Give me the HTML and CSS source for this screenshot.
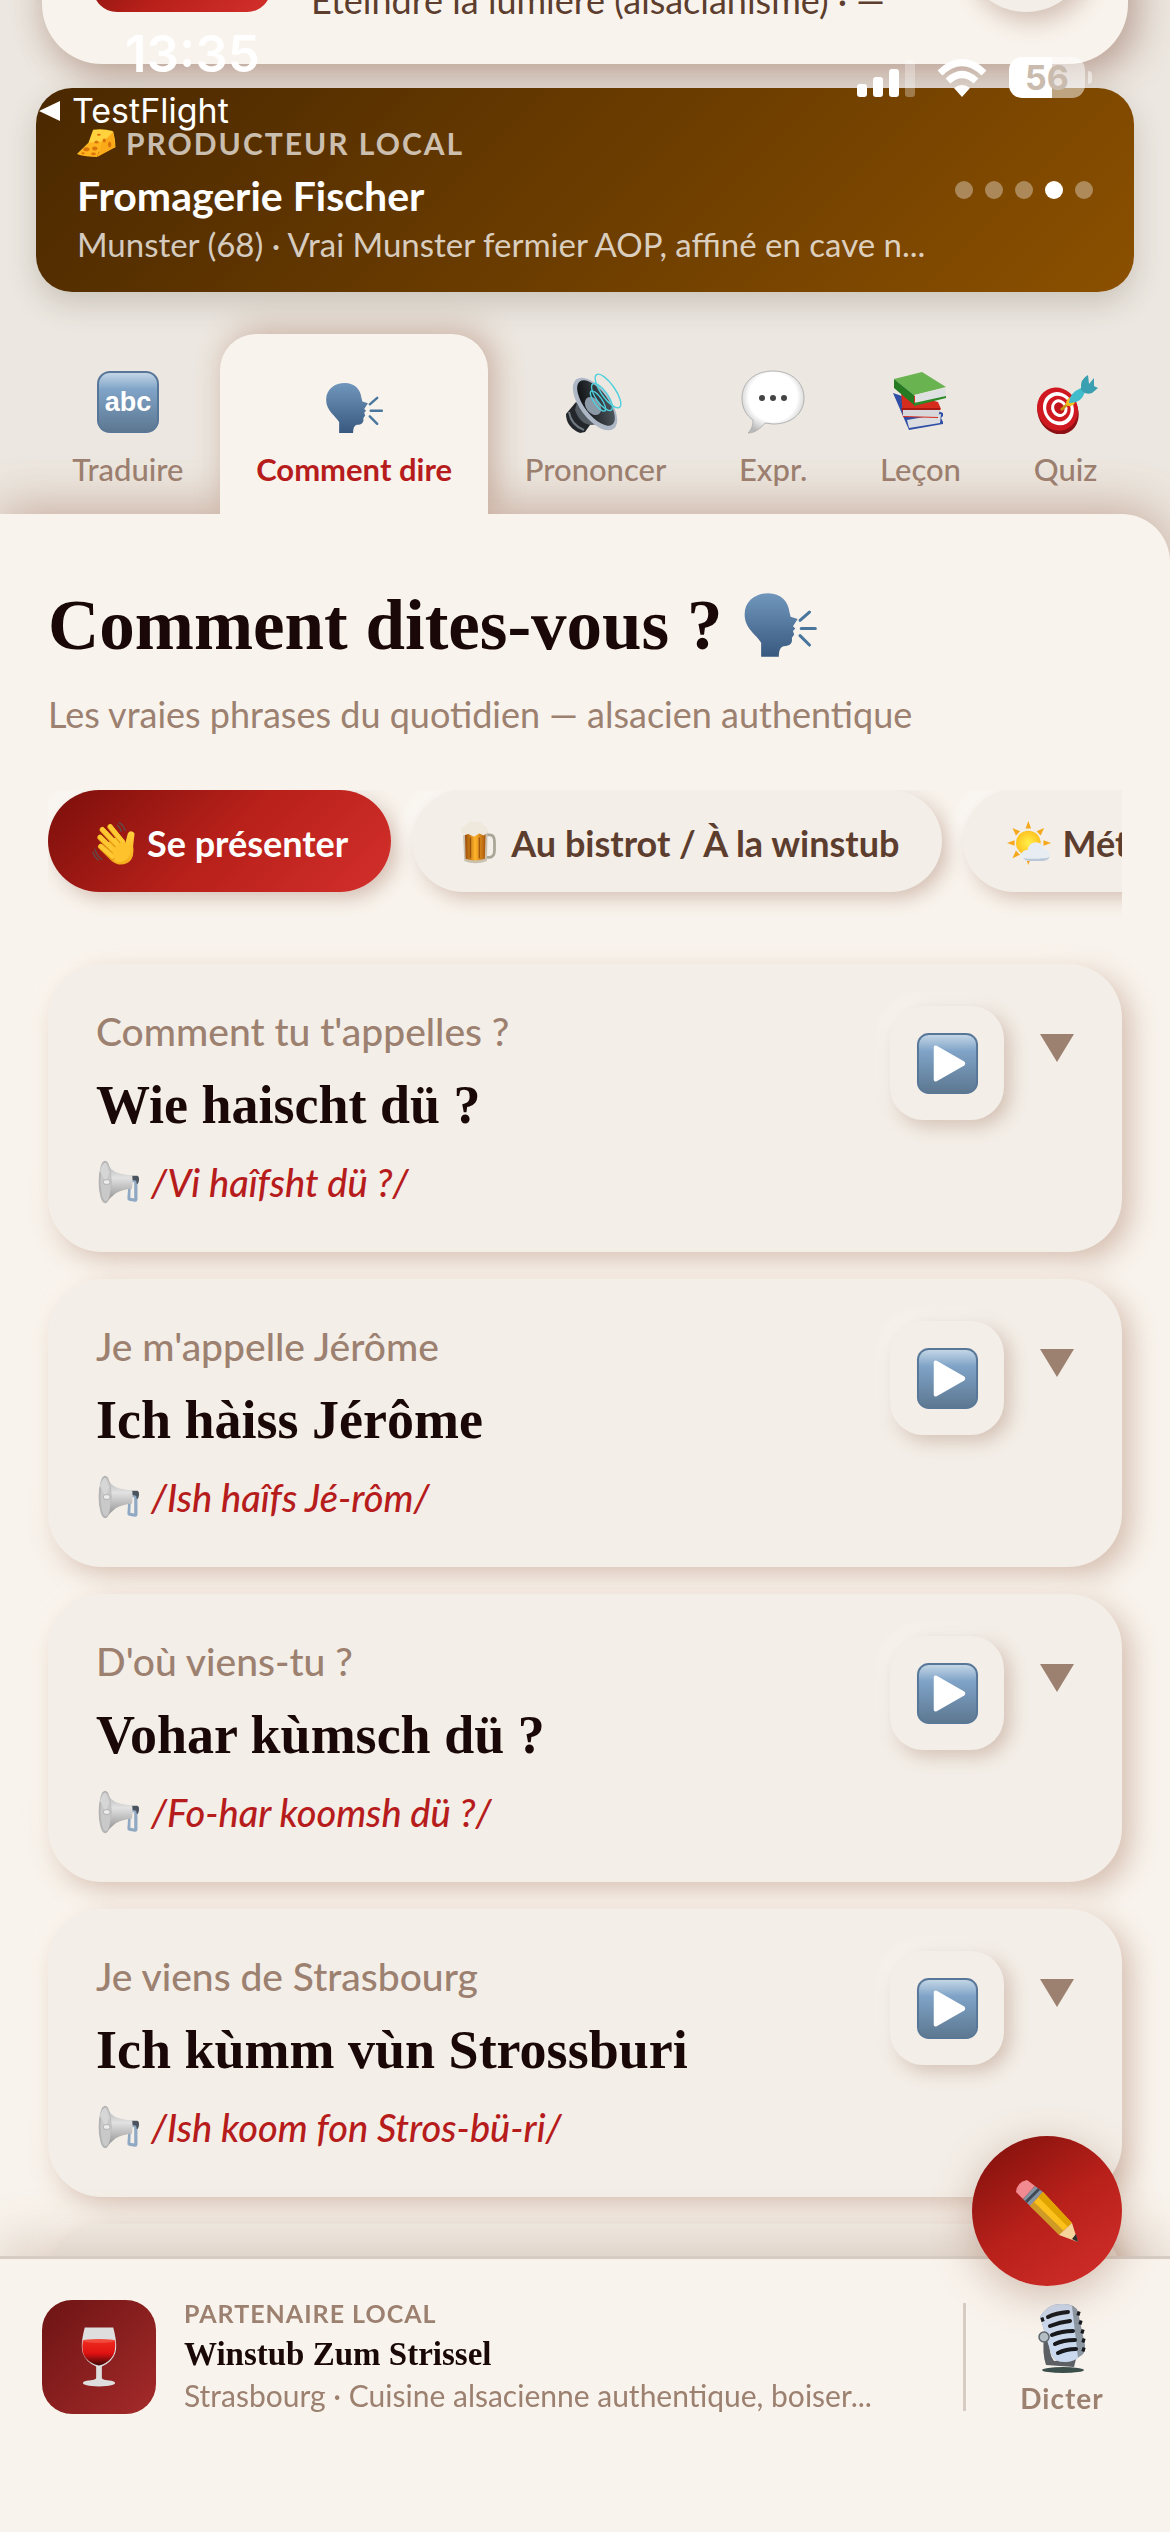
FILE: index.html
```html
<!DOCTYPE html>
<html lang="fr">
<head>
  <meta charset="UTF-8">
  <meta name="viewport" content="width=device-width, initial-scale=1.0">
  <title>Comment dites-vous ?</title>
  <link rel="stylesheet" href="styles.css">
</head>
<body>

  <!-- Icônes partagées -->
  <svg class="sprite" aria-hidden="true">
    <defs>
      <linearGradient id="g-blue" x1="0" y1="0" x2="0" y2="1">
        <stop offset="0" stop-color="#c3d6e6"/><stop offset=".28" stop-color="#7fa3c7"/><stop offset="1" stop-color="#5c7790"/>
      </linearGradient>
      <linearGradient id="g-head" x1="0" y1="0" x2="0" y2="1">
        <stop offset="0" stop-color="#7197bd"/><stop offset="1" stop-color="#38587f"/>
      </linearGradient>
      <linearGradient id="g-steel" x1="0" y1="0" x2="0" y2="1">
        <stop offset="0" stop-color="#a9a9a9"/><stop offset=".4" stop-color="#e2e2e2"/><stop offset="1" stop-color="#888888"/>
      </linearGradient>
      <linearGradient id="g-dark" x1="0" y1="0" x2="1" y2="1">
        <stop offset="0" stop-color="#050607"/><stop offset="1" stop-color="#59636b"/>
      </linearGradient>
      <radialGradient id="g-bubble" cx=".5" cy=".42" r=".6">
        <stop offset=".65" stop-color="#ffffff"/><stop offset="1" stop-color="#b9b9b9"/>
      </radialGradient>
      <linearGradient id="g-beer" x1="0" y1="0" x2="1" y2="0">
        <stop offset="0" stop-color="#9a4a08"/><stop offset=".5" stop-color="#ffb52b"/><stop offset="1" stop-color="#a9550c"/>
      </linearGradient>
      <linearGradient id="g-wine" x1="0" y1="0" x2="0" y2="1">
        <stop offset="0" stop-color="#ee2a1e"/><stop offset=".5" stop-color="#e01212"/><stop offset="1" stop-color="#3d0505"/>
      </linearGradient>
      <linearGradient id="g-hand" x1="0" y1="0" x2="0" y2="1">
        <stop offset="0" stop-color="#ffd23c"/><stop offset="1" stop-color="#f5ab1b"/>
      </linearGradient>
      <radialGradient id="g-sun"><stop offset="0" stop-color="#fff04a"/><stop offset="1" stop-color="#ffc21f"/></radialGradient>
    </defs>

    <symbol id="i-abc" viewBox="0 0 64 64">
      <rect x="1" y="1" width="62" height="62" rx="13" fill="#587798"/>
      <rect x="3" y="3" width="58" height="59" rx="11" fill="url(#g-blue)"/>
      <text x="32" y="41" text-anchor="middle" class="abc-text">abc</text>
    </symbol>
    <symbol id="i-play" viewBox="0 0 64 64">
      <rect x="1" y="1" width="62" height="62" rx="12" fill="#587798"/>
      <rect x="3" y="3" width="58" height="59" rx="10" fill="url(#g-blue)"/>
      <path d="M18 16q0-3 3-2l28 16q2 2 0 4L21 50q-3 1-3-2z" fill="#fff"/>
    </symbol>
    <symbol id="i-head" viewBox="0 0 64 56">
      <path d="M16 55V43C12 36 2 31 2 19 2 7 12 1 22 1c11 0 17 7 18 16l1 4 6 2-4 6 2 2-2 2 1 3-2 3c1 5-2 7-7 7-3 1-4 4-4 9z" fill="url(#g-head)"/>
      <path d="M49 24l8-7M50 31h12M49 37l8 8" stroke="#4a769d" stroke-width="2.6" stroke-linecap="round"/>
    </symbol>
    <symbol id="i-speaker" viewBox="0 0 64 64">
      <path d="M12 32L2 44q0 13 14 19l5-1 10-14z" fill="#23272b"/>
      <path d="M5 42q2 13 15 18" fill="none" stroke="#717980" stroke-width="2"/>
      <path d="M14 28l-3 12q5 14 16 15l20-2z" fill="#555d64"/>
      <ellipse cx="31" cy="34" rx="15" ry="31" transform="rotate(-37 31 34)" fill="#aeb7c6"/>
      <ellipse cx="32" cy="33" rx="12" ry="27" transform="rotate(-37 32 33)" fill="url(#g-dark)"/>
      <ellipse cx="29" cy="36" rx="7" ry="10" transform="rotate(-37 29 36)" fill="#8b98a6"/>
      <g fill="none" stroke="#4ed0dd" stroke-width="1.4">
        <ellipse cx="34" cy="31" rx="4" ry="12" transform="rotate(-35 34 31)"/>
        <ellipse cx="38" cy="27" rx="6" ry="16" transform="rotate(-35 38 27)"/>
        <ellipse cx="44" cy="21" rx="7" ry="20" transform="rotate(-35 44 21)"/>
      </g>
    </symbol>
    <symbol id="i-bubble" viewBox="0 0 64 64">
      <path d="M32 1c18 0 31 11 31 27S50 54 32 54l-8-1C20 58 14 63 7 63c4-4 5-8 5-13C5 45 1 38 1 28 1 12 14 1 32 1z" fill="url(#g-bubble)" stroke="#b3b3b3" stroke-width="1"/>
      <circle cx="21" cy="28" r="3" fill="#444"/><circle cx="32" cy="28" r="3" fill="#444"/><circle cx="43" cy="28" r="3" fill="#444"/>
    </symbol>
    <symbol id="i-books" viewBox="0 0 64 64">
      <path d="M4 23l6 2 44 18v3l-2 2 2 4v2L20 60z" fill="#2f4ea6"/>
      <path d="M18 50l34-6-1 9-31 5z" fill="#dcdde1"/>
      <path d="M12 22l37 10 3 7-3 3v6l-35-1z" fill="#d52c1d"/>
      <path d="M14 39l37 1-2 7-35-1z" fill="#d8d8da"/>
      <path d="M12 38h39v2H13z" fill="#a91810"/>
      <path d="M5 9L33 2l24 15-32 8z" fill="#69b350"/>
      <path d="M5 9l20 16v10L5 18z" fill="#267a22"/>
      <path d="M26 25l30-7 1 8-31 8z" fill="#dfe0e2"/>
      <path d="M25 33l32-7v2l-32 8z" fill="#2d8828"/>
    </symbol>
    <symbol id="i-dart" viewBox="0 0 64 64">
      <ellipse cx="24" cy="42" rx="20" ry="23" transform="rotate(-28 24 42)" fill="#8d1014"/>
      <g transform="rotate(-28 24 40)">
        <ellipse cx="24" cy="39" rx="20" ry="22" fill="#d01820"/>
        <ellipse cx="25" cy="39" rx="15" ry="17" fill="#fff"/>
        <ellipse cx="25" cy="39" rx="12" ry="13" fill="#d01820"/>
        <ellipse cx="26" cy="39" rx="8" ry="9" fill="#fff"/>
        <ellipse cx="26" cy="39" rx="5" ry="6" fill="#c3141b"/>
      </g>
      <path d="M27 40l10-9" stroke="#c99312" stroke-width="3"/>
      <path d="M32 35q0-7 5-8l4 6q-3 5-9 2z" fill="#f0c21f"/>
      <path d="M35 33q0-10 12-15l4 4q-4 12-16 11z" fill="#42bccb"/>
      <path d="M47 19q-1-10 7-14l1 9 5-6v8l4 2-6 5q-6 2-10-2z" fill="#3a9fb0"/>
    </symbol>
    <symbol id="i-horn" viewBox="58 29 130 136">
      <path d="M156 86h26q4 3 2 8l-4 10v48q-1 7-8 6l-18-3q-6-2-5-8l2-28h8l-1 27 12 2V98l-12-2z" fill="#8fa9c4"/>
      <path d="M160 78h20q6 2 5 12l-3 12-4 1-2-10-18-4z" fill="#4b545e"/>
      <path d="M82 31q12 32 44 40 20 4 38 6 3 20-1 41-30 2-50 14-16 12-31 31z" fill="url(#g-steel)"/>
      <ellipse cx="80" cy="97" rx="20" ry="66" fill="#b4b4b4"/>
      <ellipse cx="82" cy="97" rx="16" ry="59" fill="#c9c9c9"/>
      <path d="M82 97L64 62q8-24 17-25l12 30z" fill="#d6d6d6"/>
      <rect x="75" y="90" width="20" height="14" rx="6" fill="#ededed" stroke="#9d9d9d" stroke-width="2"/>
    </symbol>
    <symbol id="i-cheese" viewBox="56 55 116 87">
      <path d="M104 59q30-4 58 4 8 20 8 48l-48 12-66 8 34-33z" fill="#ffd23e"/>
      <path d="M57 132l35-34 38-4-14 46q-34 0-59-8z" fill="#ffb41f"/>
      <path d="M130 94q16-8 34-30l6 47-54 29z" fill="#fbaa1a"/>
      <g fill="#d9730b">
        <ellipse cx="84" cy="117" rx="9" ry="6"/><ellipse cx="109" cy="115" rx="8" ry="6"/><ellipse cx="105" cy="131" rx="7" ry="4"/>
        <ellipse cx="74" cy="129" rx="5" ry="3"/><ellipse cx="137" cy="91" rx="5" ry="6"/><ellipse cx="153" cy="103" rx="5" ry="8"/>
        <ellipse cx="114" cy="96" rx="6" ry="4"/><ellipse cx="121" cy="74" rx="6" ry="3"/>
      </g>
    </symbol>
    <symbol id="i-wave" viewBox="34 30 134 136">
      <path d="M84 96L112 76l24 22 8-30q6-10 16-4 6 4 4 10l-4 34q4 26-6 42-14 18-42 14-22-8-28-24z" fill="url(#g-hand)"/>
      <g stroke="#e79a15" stroke-width="17" stroke-linecap="round">
        <path d="M60 109l34 33M58 81l44 45M65 57l47 52M89 48l38 49"/>
      </g>
      <g stroke="#fdc832" stroke-width="14" stroke-linecap="round">
        <path d="M60 108l36 32M58 80l46 44M65 56l49 50M89 47l40 48"/>
      </g>
      <path d="M94 120l30-26 26 10q6 20-4 38-18 20-40 14z" fill="#fdc22c"/>
      <path d="M117 36q14 6 18 24M111 43q10 6 12 19M42 117q6 22 22 32M36 126q6 18 16 24" fill="none" stroke="#5f4d4b" stroke-width="4" stroke-linecap="round"/>
    </symbol>
    <symbol id="i-beer" viewBox="0 0 54 64">
      <path d="M39 20h5q7 0 7 10v12q0 10-7 11h-5" fill="none" stroke="#a9a597" stroke-width="4"/>
      <path d="M5 14h36l-1 44q-17 7-33 0z" fill="#c9c0ae"/>
      <path d="M8 17h30l-1 38q-15 5-28 0z" fill="url(#g-beer)"/>
      <path d="M16 24v30M29 24v30" stroke="#7a3504" stroke-width="2" opacity=".6"/>
      <path d="M3 16Q1 8 9 6q6-8 14-4 8-3 12 4 8 2 6 11l-6 4-6-3-8 5-8-4-7 2z" fill="#efe8dc"/>
    </symbol>
    <symbol id="i-sun" viewBox="0 0 64 64">
      <path d="M31 0l4 11h-8zM31 64l-4-11h8zM0 32l11-4v8zM8 10l11 5-6 6zM54 10l-5 11-6-6zM8 54l5-11 6 6zM64 32l-11-4v8z" fill="#f5a81c"/>
      <circle cx="31" cy="32" r="18" fill="url(#g-sun)"/>
      <path d="M30 58q-9 0-9-8t9-8q2-11 12-11 9 0 11 9 9 1 9 9 0 9-10 9z" fill="#e8edf3"/>
      <path d="M24 54q3 4 8 4h20q8 0 10-6-5 3-10 2-14 2-28 0z" fill="#b9c7d8"/>
    </symbol>
    <symbol id="i-wine" viewBox="0 0 40 64">
      <path d="M5 1h30q5 19 2 27-3 9-14 14v12q0 2 10 3c8 2 4 6-13 6S-1 59 7 57q10-1 10-3V42Q6 37 3 28 0 20 5 1z" fill="#dedede"/>
      <path d="M3 15h34q1 13-4 18-5 6-13 8Q11 39 6 33 1 27 3 15z" fill="url(#g-wine)"/>
      <ellipse cx="20" cy="15" rx="17" ry="2" fill="#f24a3c"/>
    </symbol>
    <symbol id="i-pencil" viewBox="0 0 64 64">
      <path d="M1 13Q2 3 12 1l8 6L8 20z" fill="#f28a91"/>
      <path d="M8 20L20 7l8 6-13 14z" fill="#8593a2"/>
      <path d="M11 23L24 10" stroke="#404a55" stroke-width="3"/>
      <path d="M15 27L28 13l29 31-12 11z" fill="#fcc21b"/>
      <path d="M15 27l4-4 30 29-5 4z" fill="#cf9a26"/>
      <path d="M23 18l5-5 29 31-4 4z" fill="#e0a300"/>
      <path d="M44 56l13-12 6 19z" fill="#f5d49c"/>
      <path d="M57 60l4-5 2 8z" fill="#2d2d2d"/>
    </symbol>
    <symbol id="i-mic" viewBox="0 0 48 70">
      <path d="M8 62q-4-12-2-27l6 1q-2 14 4 22l22-2-2 8z" fill="#5c6064"/>
      <path d="M2 14Q10 0 25 1q13 0 15 8l7 33q1 9-6 12-6 6-15 5-10 0-13-9z" fill="#8c97a2"/>
      <path d="M2 14Q10 0 25 1q6 0 9 2l6 52q-6 4-14 4-10 0-13-9z" fill="#cbd9ee"/>
      <path d="M10 14q8-4 20-5M12 23q10-4 20-5M14 32q10-4 21-4M17 41q8-4 20-4M20 50q8-4 18-4" fill="none" stroke="#17191c" stroke-width="4" stroke-linecap="round"/>
      <path d="M39 10l3 1M41 19l3 1M43 28l3 1M44 37l3 1M44 46l3 1M3 17l3-1" stroke="#17191c" stroke-width="4"/>
      <circle cx="6" cy="34" r="5" fill="#b6bec5" stroke="#60666b" stroke-width="1.5"/>
      <ellipse cx="25" cy="67" rx="21" ry="3" fill="#3c4f4c"/>
    </symbol>
  </svg>

  <div class="statusbar">
    <div class="status-left">
      <span class="clock">13:35</span>
      <a class="back-app" href="#">
        <svg width="22" height="20" viewBox="0 0 22 20" aria-hidden="true"><path d="M1 10L22 0v20z" fill="#fff"/></svg>
        TestFlight
      </a>
    </div>
    <div class="status-right">
      <svg width="58" height="40" viewBox="0 0 58 40" aria-hidden="true">
        <rect x="0" y="26" width="10" height="13" rx="3" fill="#fff"/>
        <rect x="16" y="19" width="10" height="20" rx="3" fill="#fff"/>
        <rect x="32" y="11" width="10" height="28" rx="3" fill="#fff"/>
        <rect x="48" y="2" width="10" height="37" rx="3" fill="#fff" opacity=".3"/>
      </svg>
      <svg width="50" height="38" viewBox="0 0 50 38" aria-hidden="true">
        <g fill="none" stroke="#fff" stroke-width="7">
          <path d="M3 14Q25-7 47 14"/>
          <path d="M11 22q14-13 28 0"/>
        </g>
        <path d="M17 29q8-6 16 0l-8 9z" fill="#fff"/>
      </svg>
      <div class="battery"><span>56</span></div>
    </div>
  </div>

  <section class="word-card">
    <button class="word-badge" aria-label="Mot du jour"></button>
    <p class="word-text">Éteindre la lumière (alsacianisme) · —</p>
    <button class="word-round" aria-label="Écouter"></button>
  </section>

  <section class="banner">
    <div class="banner-text">
      <p class="banner-kicker"><svg width="39" height="30"><use href="#i-cheese"/></svg>PRODUCTEUR LOCAL</p>
      <h2 class="banner-title">Fromagerie Fischer</h2>
      <p class="banner-desc">Munster (68) · Vrai Munster fermier AOP, affiné en cave n...</p>
    </div>
    <div class="dots">
      <span class="dot"></span>
      <span class="dot"></span>
      <span class="dot"></span>
      <span class="dot on"></span>
      <span class="dot"></span>
    </div>
  </section>

  <nav class="tabs">
    <button class="tab"><svg><use href="#i-abc"/></svg>Traduire</button>
    <button class="tab active"><svg><use href="#i-head"/></svg>Comment dire</button>
    <button class="tab"><svg><use href="#i-speaker"/></svg>Prononcer</button>
    <button class="tab"><svg><use href="#i-bubble"/></svg>Expr.</button>
    <button class="tab"><svg><use href="#i-books"/></svg>Leçon</button>
    <button class="tab"><svg><use href="#i-dart"/></svg>Quiz</button>
  </nav>

  <main class="panel">
    <h1 class="title">Comment dites-vous ? <svg width="76" height="66"><use href="#i-head"/></svg></h1>
    <p class="subtitle">Les vraies phrases du quotidien — alsacien authentique</p>

    <div class="chips">
      <button class="chip selected"><svg><use href="#i-wave"/></svg>Se présenter</button>
      <button class="chip"><svg><use href="#i-beer"/></svg>Au bistrot / À la winstub</button>
      <button class="chip"><svg><use href="#i-sun"/></svg>Météo</button>
    </div>

    <div class="phrases">
      <article class="phrase">
        <div class="phrase-body">
          <p class="fr">Comment tu t'appelles ?</p>
          <h3 class="als">Wie haischt dü ?</h3>
          <p class="phon"><svg><use href="#i-horn"/></svg><em>/Vi haîfsht dü ?/</em></p>
        </div>
        <button class="play" aria-label="Écouter"><svg><use href="#i-play"/></svg></button>
        <button class="chevron" aria-label="Détails"></button>
      </article>

      <article class="phrase">
        <div class="phrase-body">
          <p class="fr">Je m'appelle Jérôme</p>
          <h3 class="als">Ich hàiss Jérôme</h3>
          <p class="phon"><svg><use href="#i-horn"/></svg><em>/Ish haîfs Jé-rôm/</em></p>
        </div>
        <button class="play" aria-label="Écouter"><svg><use href="#i-play"/></svg></button>
        <button class="chevron" aria-label="Détails"></button>
      </article>

      <article class="phrase">
        <div class="phrase-body">
          <p class="fr">D'où viens-tu ?</p>
          <h3 class="als">Vohar kùmsch dü ?</h3>
          <p class="phon"><svg><use href="#i-horn"/></svg><em>/Fo-har koomsh dü ?/</em></p>
        </div>
        <button class="play" aria-label="Écouter"><svg><use href="#i-play"/></svg></button>
        <button class="chevron" aria-label="Détails"></button>
      </article>

      <article class="phrase">
        <div class="phrase-body">
          <p class="fr">Je viens de Strasbourg</p>
          <h3 class="als">Ich kùmm vùn Strossburi</h3>
          <p class="phon"><svg><use href="#i-horn"/></svg><em>/Ish koom fon Stros-bü-ri/</em></p>
        </div>
        <button class="play" aria-label="Écouter"><svg><use href="#i-play"/></svg></button>
        <button class="chevron" aria-label="Détails"></button>
      </article>

      <article class="phrase"></article>
    </div>
  </main>

  <footer class="partner">
    <div class="partner-logo"><svg width="38" height="62"><use href="#i-wine"/></svg></div>
    <div class="partner-text">
      <p class="partner-kicker">PARTENAIRE LOCAL</p>
      <h3 class="partner-name">Winstub Zum Strissel</h3>
      <p class="partner-desc">Strasbourg · Cuisine alsacienne authentique, boiser...</p>
    </div>
    <button class="dictate"><svg width="48" height="70"><use href="#i-mic"/></svg>Dicter</button>
  </footer>

  <button class="fab" aria-label="Écrire"><svg width="64" height="64"><use href="#i-pencil"/></svg></button>

</body>
</html>
```

FILE: styles.css
```css
* {
  box-sizing: border-box;
}

body {
  margin: 0;
  height: 100vh;
  overflow: hidden;
  display: flex;
  flex-direction: column;
  background: #ece7e0;
  color: #1a0808;
  font-family: Lato, "Open Sans", sans-serif;
}

h1, h2, h3, p {
  margin: 0;
}

button {
  border: none;
  padding: 0;
  background: none;
  font-family: inherit;
  cursor: pointer;
}

.sprite {
  position: absolute;
  width: 0;
  height: 0;
}

.abc-text {
  font-family: "Liberation Sans", sans-serif;
  font-size: 27px;
  font-weight: bold;
  fill: #fff;
}

/* Barre d'état */
.statusbar {
  position: absolute;
  z-index: 10;
  top: 0;
  left: 0;
  right: 0;
  display: flex;
  justify-content: space-between;
  padding: 24px 85px 0 38px;
  color: #fff;
  font-family: Inter, sans-serif;
}

.status-left {
  display: flex;
  flex-direction: column;
}

.clock {
  padding-left: 87px;
  font-size: 51px;
  font-weight: 600;
  line-height: 60px;
}

.back-app {
  display: flex;
  align-items: center;
  gap: 12px;
  margin-top: 7px;
  color: #fff;
  font-size: 34px;
  line-height: 40px;
  text-decoration: none;
}

.status-right {
  display: flex;
  align-items: center;
  align-self: flex-start;
  gap: 22px;
  padding-top: 33px;
}

.battery {
  position: relative;
  width: 76px;
  height: 41px;
  border-radius: 13px;
  background: linear-gradient(90deg, #fff 56%, rgba(255, 255, 255, 0.5) 56%);
  color: #c9bbae;
  font-size: 34px;
  font-weight: 700;
  line-height: 41px;
  text-align: center;
}

.battery::after {
  content: "";
  position: absolute;
  top: 14px;
  right: -7px;
  width: 4px;
  height: 13px;
  border-radius: 0 4px 4px 0;
  background: rgba(255, 255, 255, 0.5);
}

/* Mot du jour, déjà défilé vers le haut */
.word-card {
  flex: none;
  display: flex;
  align-items: flex-end;
  gap: 40px;
  height: 240px;
  margin: -176px 42px 0;
  padding: 0 39px 52px 51px;
  border-radius: 60px;
  background: #f8f3ec;
  box-shadow: 12px 12px 36px rgba(130, 80, 60, 0.38), -6px 6px 30px rgba(130, 80, 60, 0.14);
}

.word-badge {
  width: 178px;
  height: 80px;
  border-radius: 24px;
  background: linear-gradient(135deg, #7b0f0b, #b8201a 50%, #d32f2b);
}

.word-text {
  flex: 1;
  margin-bottom: -12px;
  color: #5c3d2e;
  font-size: 36px;
  line-height: 48px;
  white-space: nowrap;
}

.word-round {
  width: 126px;
  height: 126px;
  border-radius: 50%;
  background: #f3eee7;
  box-shadow: 6px 10px 22px rgba(130, 80, 60, 0.3);
}

/* Bannière producteur */
.banner {
  flex: none;
  position: relative;
  display: flex;
  align-items: center;
  justify-content: space-between;
  margin: 24px 36px 0;
  padding: 36px 41px 28px;
  border-radius: 36px;
  background: linear-gradient(135deg, #4a2800, #8b5000);
  box-shadow: 0 12px 30px rgba(70, 60, 40, 0.2);
  color: #fff;
}

.banner-kicker {
  display: flex;
  align-items: center;
  gap: 10px;
  color: rgba(255, 255, 255, 0.7);
  font-size: 30px;
  font-weight: 700;
  letter-spacing: 2px;
  line-height: 38px;
}

.banner-title {
  margin-top: 6px;
  font-size: 41px;
  line-height: 56px;
}

.banner-desc {
  color: rgba(255, 255, 255, 0.75);
  font-size: 33px;
  line-height: 40px;
  white-space: nowrap;
}

.dots {
  display: flex;
  gap: 12px;
  padding-bottom: 8px;
}

.dot {
  width: 18px;
  height: 18px;
  border-radius: 50%;
  background: rgba(255, 255, 255, 0.35);
}

.dot.on {
  background: #fff;
}

/* Onglets */
.tabs {
  flex: none;
  display: flex;
  height: 180px;
  margin-top: 42px;
  padding: 0 36px;
}

.tab {
  flex: 1 1 auto;
  display: flex;
  flex-direction: column;
  align-items: center;
  gap: 17px;
  padding: 36px 32px 0;
  color: #9c8070;
  font-size: 31px;
  font-weight: 500;
  line-height: 36px;
  white-space: nowrap;
}

.tab svg {
  width: 64px;
  height: 64px;
}

.tab.active {
  position: relative;
  z-index: 2;
  border-radius: 36px 36px 0 0;
  background: #f8f3ec;
  box-shadow: 6px -4px 30px rgba(150, 90, 65, 0.4);
  clip-path: inset(-50px -50px 0 -50px);
  color: #b71c1c;
  font-weight: 700;
}

.tab.active svg {
  width: 60px;
  height: 52px;
  margin-top: 12px;
}

/* Panneau principal */
.panel {
  flex: 1;
  min-height: 0;
  position: relative;
  padding: 69px 48px 0;
  border-radius: 0 48px 0 0;
  background: #f8f3ec;
  box-shadow: 0 -6px 48px rgba(150, 90, 65, 0.42);
}

.title {
  display: flex;
  align-items: center;
  gap: 20px;
  font-family: "Liberation Serif", serif;
  font-size: 71px;
  line-height: 84px;
}

.subtitle {
  margin-top: 25px;
  color: #9c8070;
  font-size: 36px;
  line-height: 44px;
}

.chips {
  display: flex;
  gap: 21px;
  margin-top: 54px;
  padding-bottom: 30px;
  overflow: hidden;
}

.chip {
  flex: none;
  display: flex;
  align-items: center;
  gap: 10px;
  height: 102px;
  padding: 4px 43px 0;
  border-radius: 51px;
  background: #f3eee7;
  box-shadow: 6px 6px 18px rgba(140, 85, 60, 0.32), -6px -6px 18px rgba(255, 255, 255, 0.7);
  color: #5c3d2e;
  font-size: 36px;
  font-weight: 700;
}

.chip svg {
  width: 46px;
  height: 44px;
}

.chip.selected {
  background: linear-gradient(135deg, #7b0f0b, #b8201a 50%, #d32f2b);
  color: #fff;
}

.phrases {
  display: flex;
  flex-direction: column;
  gap: 27px;
  margin-top: 42px;
}

.phrase {
  display: flex;
  align-items: flex-start;
  min-height: 288px;
  padding: 42px 48px 48px;
  border-radius: 54px;
  background: #f3eee7;
  box-shadow: 9px 9px 27px rgba(150, 90, 65, 0.34), -9px -9px 27px rgba(255, 250, 244, 0.6);
}

.phrase-body {
  flex: 1;
}

.fr {
  color: #9c8070;
  font-size: 39px;
  font-weight: 500;
  line-height: 50px;
}

.als {
  margin-top: 17px;
  font-family: "Liberation Serif", serif;
  font-size: 54px;
  line-height: 64px;
}

.phon {
  display: flex;
  align-items: center;
  gap: 9px;
  margin-top: 23px;
  color: #b71c1c;
  font-size: 38px;
  font-weight: 500;
  line-height: 44px;
}

.phon svg {
  width: 46px;
  height: 44px;
}

.play {
  display: flex;
  align-items: center;
  justify-content: center;
  width: 114px;
  height: 114px;
  margin-right: 36px;
  border-radius: 33px;
  background: #f3eee7;
  box-shadow: 6px 6px 18px rgba(140, 85, 60, 0.3), -6px -6px 18px rgba(255, 255, 255, 0.5);
}

.play svg {
  width: 63px;
  height: 63px;
}

.chevron {
  width: 34px;
  height: 28px;
  margin-top: 28px;
  background: #9c8070;
  clip-path: polygon(0 0, 100% 0, 50% 100%);
}

/* Partenaire en bas d'écran */
.partner {
  position: fixed;
  z-index: 5;
  left: 0;
  right: 0;
  bottom: 0;
  display: flex;
  align-items: center;
  padding: 41px 12px 118px 42px;
  border-top: 3px solid #d6ccc3;
  background: #f8f3ec;
  box-shadow: 0 -12px 48px rgba(150, 110, 85, 0.28);
}

.partner-logo {
  display: flex;
  align-items: center;
  justify-content: center;
  width: 114px;
  height: 114px;
  margin-right: 28px;
  border-radius: 30px;
  background: linear-gradient(135deg, #6d1414, #a52a2a);
}

.partner-text {
  flex: 1;
}

.partner-kicker {
  color: #9c8070;
  font-size: 25px;
  font-weight: 700;
  letter-spacing: 1px;
  line-height: 26px;
}

.partner-name {
  margin-top: 6px;
  font-family: "Liberation Serif", serif;
  font-size: 33px;
  line-height: 44px;
}

.partner-desc {
  color: #9c8070;
  font-size: 30px;
  line-height: 38px;
  white-space: nowrap;
}

.dictate {
  display: flex;
  flex-direction: column;
  align-items: center;
  gap: 9px;
  width: 195px;
  height: 108px;
  border-left: 3px solid #d6ccc3;
  color: #9c8070;
  font-size: 28px;
  font-weight: 700;
  letter-spacing: 1px;
  line-height: 32px;
}

.dictate svg {
  flex: none;
}

.fab {
  position: fixed;
  z-index: 6;
  right: 48px;
  bottom: 246px;
  display: flex;
  align-items: center;
  justify-content: center;
  width: 150px;
  height: 150px;
  border-radius: 50%;
  background: linear-gradient(145deg, #7b0f0b, #b8201a 50%, #d32f2b);
  box-shadow: 0 10px 40px rgba(140, 85, 60, 0.35);
}
```
